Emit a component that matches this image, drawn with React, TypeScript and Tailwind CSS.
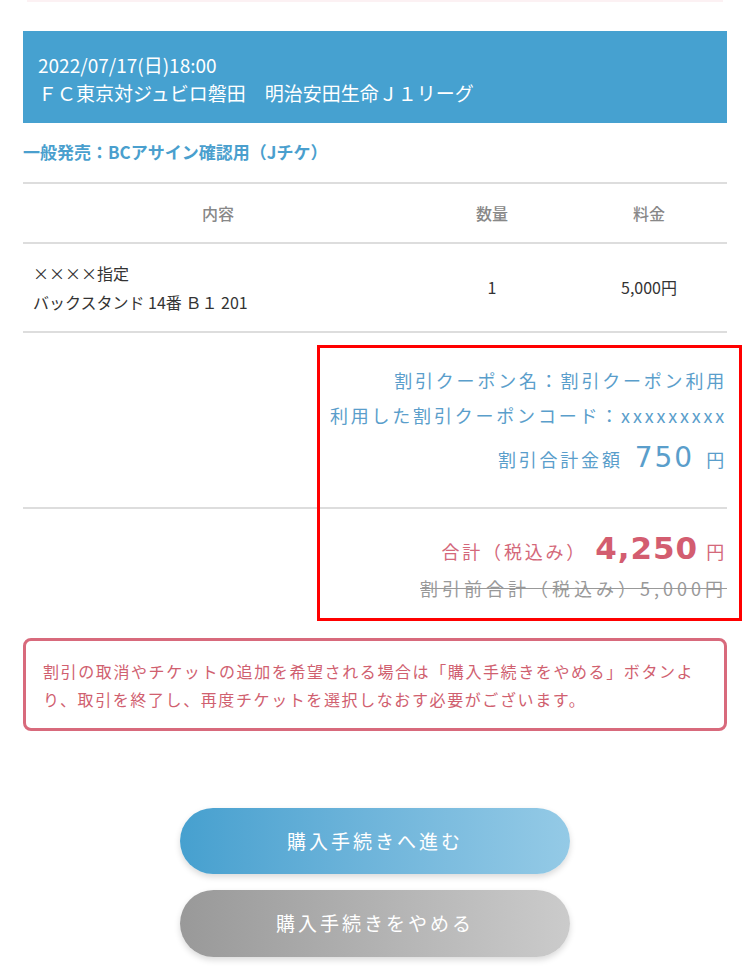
const jp = { fontFamily: '"Noto Sans CJK JP", "Noto Sans", sans-serif' }
const num = { fontFamily: '"DejaVu Sans", "Noto Sans", sans-serif' }

export default function App() {
  return (
    <div className="relative w-[750px] bg-white pb-4 text-[#333]" style={jp}>
      <div className="mx-[27px] h-[2px] bg-[#fcf1f3]" />

      <div className="px-[23px]">
        <div className="mt-[29px] h-[92px] bg-[#46a1d0] px-[15px] pt-[20px] text-[19px] leading-[28px] text-white">
          <p>2022/07/17(日)18:00</p>
          <p>ＦＣ東京対ジュビロ磐田　明治安田生命Ｊ１リーグ</p>
        </div>

        <p className="mt-[17px] text-[17px] font-bold leading-[24px] text-[#4a9fce]">
          一般発売：BCアサイン確認用（Jチケ）
        </p>

        <table className="mt-[18px] w-full border-collapse">
          <thead>
            <tr className="border-y-2 border-[#dddddd] text-[16px] text-[#888]">
              <th className="h-[60px] w-[390px] font-medium">内容</th>
              <th className="w-[158px] font-medium">数量</th>
              <th className="font-medium">料金</th>
            </tr>
          </thead>
          <tbody>
            <tr className="border-b-2 border-[#dddddd] text-[16px] leading-[29px]">
              <td className="h-[89px] pl-[10px]">
                <p>××××指定</p>
                <p>バックスタンド 14番 Ｂ１ 201</p>
              </td>
              <td className="text-center">1</td>
              <td className="text-center">5,000円</td>
            </tr>
          </tbody>
        </table>

        <div className="flex flex-col items-end pt-[30px] pb-[29px] text-[18px] tracking-[2.8px] text-[#5a9ecb]">
          <p className="leading-[35px]">割引クーポン名：割引クーポン利用</p>
          <p className="leading-[35px]">利用した割引クーポンコード：xxxxxxxxx</p>
          <p className="mt-[6px] flex items-baseline leading-[38px]">
            割引合計金額
            <span className="ml-[12px] mr-[12px] text-[28px] tracking-[2px]" style={num}>750</span>
            円
          </p>
        </div>

        <div className="h-[2px] bg-[#dddddd]" />

        <div className="flex flex-col items-end pt-[19px] text-[18px] tracking-[2.8px]">
          <p className="flex items-baseline leading-[40px] text-[#d4687a]">
            合計（税込み）
            <span className="ml-[8px] mr-[8px] text-[31px] font-bold tracking-[1px] text-[#d35d70]" style={num}>4,250</span>
            円
          </p>
          <p className="leading-[34px] tracking-[4px] text-[#999] line-through">割引前合計（税込み）5,000円</p>
        </div>

        <div className="mt-[33px] rounded-[8px] border-[3px] border-[#d86a7c] px-[17px] pt-[16px] pb-[15px] text-[16px] leading-[28px] tracking-[1.6px] text-[#d0606f]">
          割引の取消やチケットの追加を希望される場合は「購入手続きをやめる」ボタンよ
          <br />
          り、取引を終了し、再度チケットを選択しなおす必要がございます。
        </div>

        <div className="mt-[77px] flex flex-col items-center gap-[16px]">
          <button className="h-[66px] w-[390px] rounded-full bg-gradient-to-r from-[#46a0cf] to-[#94cae6] text-[19px] tracking-[3px] text-white shadow-[0_3px_6px_rgba(0,0,0,0.15)]">
            購入手続きへ進む
          </button>
          <button className="h-[67px] w-[390px] rounded-full bg-gradient-to-r from-[#999999] to-[#cbcbcb] text-[19px] tracking-[3px] text-white shadow-[0_3px_6px_rgba(0,0,0,0.15)]">
            購入手続きをやめる
          </button>
        </div>
      </div>

      <div className="absolute left-[317px] top-[345px] h-[276px] w-[425px] border-[3px] border-[#ff0000]" />
    </div>
  )
}
